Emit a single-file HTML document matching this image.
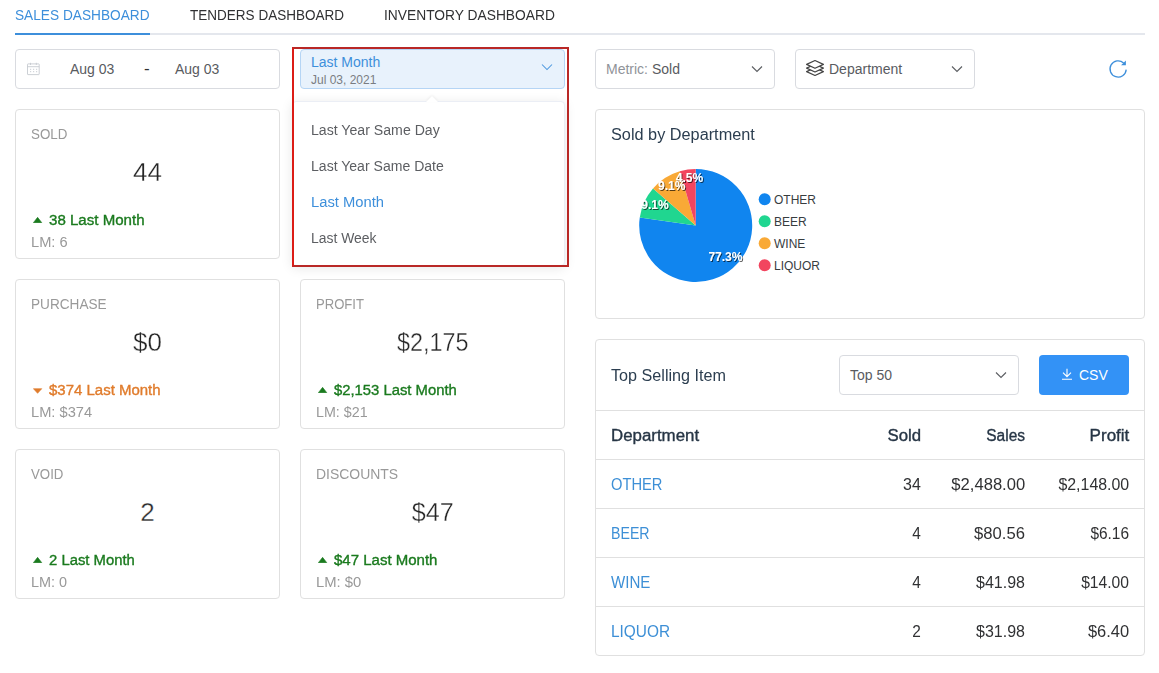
<!DOCTYPE html>
<html><head><meta charset="utf-8">
<style>
*{box-sizing:border-box;margin:0;padding:0}
html,body{width:1159px;height:673px;background:#fff;overflow:hidden}
body{font-family:"Liberation Sans",Arial,sans-serif;color:#333;position:relative;font-size:14px}
.abs{position:absolute}
span{white-space:nowrap}
.tabs{position:absolute;left:15px;top:0;width:1130px;height:35px;border-bottom:2px solid #e4e7ed}
.tab{position:absolute;top:7px;font-size:14px;line-height:16px;color:#303133;white-space:nowrap}
.tab.active{color:#3d8fdb}
.tabline{position:absolute;left:0;top:33px;width:135px;height:2px;background:#3d8fdb}
.box{position:absolute;border:1px solid #d9dbe0;border-radius:4px;background:#fff}
.card{position:absolute;border:1px solid #e0e0e0;border-radius:4px;background:#fff;width:265px;height:150px}
.card .t{position:absolute;left:15px;top:16px;font-size:14px;color:#999;line-height:16px}
.card .v{position:absolute;left:0;right:0;top:46px;text-align:center;font-size:26px;line-height:32px;color:#262626;-webkit-text-stroke:0.35px #fff}
.card .d{position:absolute;left:15px;top:102px;font-size:14px;line-height:16px;white-space:nowrap;-webkit-text-stroke:0.35px currentColor}
.card .l{position:absolute;left:15px;top:124px;font-size:14px;line-height:16px;color:#999}
.up{color:#1a7a1e}.down{color:#e07c2c}
.tri{position:absolute;left:2.4px;top:4.6px;width:9.2px;height:6px}
.down .tri{top:5.6px}
.card .d>span{margin-left:18px}
.ddi{position:absolute;left:311px;font-size:14px;line-height:16px;color:#5c5e62;white-space:nowrap}
.hl{position:absolute;left:596px;width:548px;height:1px;background:#e0e0e0}
.tr{position:absolute;left:595px;width:550px;height:18px;font-size:16px;line-height:18px;color:#303133}
.tr span{position:absolute;top:0;white-space:nowrap}
.tr .c1{left:16px}.tr .c2{right:224px}.tr .c3{right:120px}.tr .c4{right:16px}
.th{color:#263545;-webkit-text-stroke:0.35px #263545}
.lk{color:#3d8fd6}
.pl{font-size:12px;font-weight:bold;fill:#fff;font-family:"Liberation Sans",Arial,sans-serif}
.lg{font-size:12px;fill:#373d3f;font-family:"Liberation Sans",Arial,sans-serif}
</style></head><body>
<div class="tabs">
 <div class="tab active" style="left:0"><span style="display:inline-block;transform:scaleX(0.977);transform-origin:left center">SALES DASHBOARD</span></div>
 <div class="tab" style="left:175px"><span style="display:inline-block;transform:scaleX(0.966);transform-origin:left center">TENDERS DASHBOARD</span></div>
 <div class="tab" style="left:369px"><span style="display:inline-block;transform:scaleX(0.985);transform-origin:left center">INVENTORY DASHBOARD</span></div>
 <div class="tabline"></div>
</div>

<!-- date range -->
<div class="box" style="left:15px;top:49px;width:265px;height:40px"></div>
<svg class="abs" style="left:26px;top:61px" width="15" height="15" viewBox="0 0 15 15" fill="none" stroke="#c3c7ce" stroke-width="0.85"><rect x="1.5" y="2.9" width="11.7" height="10.7" rx="0.5"/><path d="M1.5 5.7H13.2M4.5 1.8V4M10.3 1.8V4"/><path d="M4 8.3H5.2M7 8.3H8.2M10 8.3H11.2M4 10.7H5.2M7 10.7H8.2M10 10.7H11.2" stroke-width="0.9"/></svg>
<div class="abs" style="left:70px;top:61px;font-size:14px;line-height:16px;color:#595b5f">Aug 03</div>
<div class="abs" style="left:144px;top:60.5px;font-size:17px;line-height:16px;color:#303133">-</div>
<div class="abs" style="left:175px;top:61px;font-size:14px;line-height:16px;color:#595b5f">Aug 03</div>

<!-- cards -->
<div class="card" style="left:15px;top:109px"><div class="t"><span style="display:inline-block;transform:scaleX(0.955);transform-origin:left center">SOLD</span></div><div class="v"><span style="display:inline-block;transform:scaleX(1.001);transform-origin:center center">44</span></div><div class="d up"><svg class="tri" viewBox="0 0 9.4 6"><path d="M4.7 0.3L9 5.7H0.4Z" fill="#1a7a1e" stroke="#1a7a1e" stroke-width="0.6" stroke-linejoin="round"/></svg><span style="display:inline-block;transform:scaleX(1.077);transform-origin:left center">38 Last Month</span></div><div class="l"><span style="display:inline-block;transform:scaleX(1.046);transform-origin:left center">LM: 6</span></div></div>
<div class="card" style="left:15px;top:279px"><div class="t"><span style="display:inline-block;transform:scaleX(0.972);transform-origin:left center">PURCHASE</span></div><div class="v"><span style="display:inline-block;transform:scaleX(1.001);transform-origin:center center">$0</span></div><div class="d down"><svg class="tri" viewBox="0 0 9.4 6"><path d="M4.7 5.4L9 0.6H0.4Z" fill="#e07c2c" stroke="#e07c2c" stroke-width="0.6" stroke-linejoin="round"/></svg><span style="display:inline-block;transform:scaleX(1.070);transform-origin:left center">$374 Last Month</span></div><div class="l"><span style="display:inline-block;transform:scaleX(1.047);transform-origin:left center">LM: $374</span></div></div>
<div class="card" style="left:300px;top:279px"><div class="t"><span style="display:inline-block;transform:scaleX(0.935);transform-origin:left center">PROFIT</span></div><div class="v"><span style="display:inline-block;transform:scaleX(0.898);transform-origin:center center">$2,175</span></div><div class="d up"><svg class="tri" viewBox="0 0 9.4 6"><path d="M4.7 0.3L9 5.7H0.4Z" fill="#1a7a1e" stroke="#1a7a1e" stroke-width="0.6" stroke-linejoin="round"/></svg><span style="display:inline-block;transform:scaleX(1.059);transform-origin:left center">$2,153 Last Month</span></div><div class="l"><span style="display:inline-block;transform:scaleX(1.020);transform-origin:left center">LM: $21</span></div></div>
<div class="card" style="left:15px;top:449px"><div class="t"><span style="display:inline-block;transform:scaleX(0.947);transform-origin:left center">VOID</span></div><div class="v"><span style="display:inline-block;transform:scaleX(1.000);transform-origin:center center">2</span></div><div class="d up"><svg class="tri" viewBox="0 0 9.4 6"><path d="M4.7 0.3L9 5.7H0.4Z" fill="#1a7a1e" stroke="#1a7a1e" stroke-width="0.6" stroke-linejoin="round"/></svg><span style="display:inline-block;transform:scaleX(1.060);transform-origin:left center">2 Last Month</span></div><div class="l"><span style="display:inline-block;transform:scaleX(1.031);transform-origin:left center">LM: 0</span></div></div>
<div class="card" style="left:300px;top:449px"><div class="t"><span style="display:inline-block;transform:scaleX(0.996);transform-origin:left center">DISCOUNTS</span></div><div class="v"><span style="display:inline-block;transform:scaleX(0.967);transform-origin:center center">$47</span></div><div class="d up"><svg class="tri" viewBox="0 0 9.4 6"><path d="M4.7 0.3L9 5.7H0.4Z" fill="#1a7a1e" stroke="#1a7a1e" stroke-width="0.6" stroke-linejoin="round"/></svg><span style="display:inline-block;transform:scaleX(1.072);transform-origin:left center">$47 Last Month</span></div><div class="l"><span style="display:inline-block;transform:scaleX(1.059);transform-origin:left center">LM: $0</span></div></div>

<!-- compare dropdown -->
<div class="abs" style="left:292px;top:101px;width:273px;height:165px;background:#fff;border:1px solid #ebeef5;border-radius:4px;box-shadow:0 2px 12px rgba(0,0,0,.1)"></div>
<div class="abs" style="left:426px;top:96px;width:0;height:0;border-left:6px solid transparent;border-right:6px solid transparent;border-bottom:6px solid #fff;filter:drop-shadow(0 -1px 1px rgba(0,0,0,.06))"></div>
<div class="abs" style="left:300px;top:49px;width:265px;height:40px;background:#e8f2fc;border:1px solid #b5d5f5;border-radius:4px"></div>
<div class="abs" style="left:311px;top:54px;font-size:14px;line-height:16px;color:#3d8fdb">Last Month</div>
<div class="abs" style="left:311px;top:73px;font-size:12px;line-height:14px;color:#7a7d82">Jul 03, 2021</div>
<svg class="abs" style="left:540px;top:62px" width="14" height="10" viewBox="0 0 14 10"><path d="M2 2.5L7 7.5L12 2.5" fill="none" stroke="#4a97de" stroke-width="1.05"/></svg>
<div class="ddi" style="top:122px"><span style="display:inline-block;transform:scaleX(1.009);transform-origin:left center">Last Year Same Day</span></div>
<div class="ddi" style="top:158px"><span style="display:inline-block;transform:scaleX(1.004);transform-origin:left center">Last Year Same Date</span></div>
<div class="ddi" style="top:194px;color:#3d8fdb"><span style="display:inline-block;transform:scaleX(1.054);transform-origin:left center">Last Month</span></div>
<div class="ddi" style="top:230px"><span style="display:inline-block;transform:scaleX(0.994);transform-origin:left center">Last Week</span></div>
<div class="abs" style="left:292px;top:47px;width:277px;height:220px;border:2px solid #b92826;border-left-color:#dc1c16"></div>

<!-- metric / department -->
<div class="box" style="left:595px;top:49px;width:180px;height:40px"></div>
<div class="abs" style="left:606px;top:61px;font-size:14px;line-height:16px;color:#909399">Metric: <span style="color:#595b5f">Sold</span></div>
<svg class="abs" style="left:750px;top:64px" width="14" height="10" viewBox="0 0 14 10"><path d="M2 2.5L7 7.5L12 2.5" fill="none" stroke="#5d5f63" stroke-width="1.15"/></svg>
<div class="box" style="left:795px;top:49px;width:180px;height:40px"></div>
<div class="abs" style="left:829px;top:61px;font-size:14px;line-height:16px;color:#595b5f">Department</div>
<svg class="abs" style="left:950px;top:64px" width="14" height="10" viewBox="0 0 14 10"><path d="M2 2.5L7 7.5L12 2.5" fill="none" stroke="#5d5f63" stroke-width="1.15"/></svg>
<svg class="abs" style="left:805px;top:59px" width="20" height="20" viewBox="0 0 20 20" fill="#fff" stroke="#444" stroke-width="1.2" stroke-linejoin="round"><path d="M10 8.7L18.4 12.6L10 16.5L1.6 12.6Z"/><path d="M10 5.2L18.4 9.1L10 13L1.6 9.1Z"/><path d="M10 1.5L18.4 5.4L10 9.3L1.6 5.4Z"/></svg>
<svg class="abs" style="left:1107px;top:58px" width="22" height="22" viewBox="0 0 22 22" fill="none"><path d="M19.2 11.6A8.1 8.1 0 1 1 16.6 5" stroke="#3d8fdb" stroke-width="1.3"/><path d="M18.9 2.4V7.2H14.1Z" fill="#3d8fdb"/></svg>

<!-- pie panel -->
<div class="box" style="left:595px;top:109px;width:550px;height:210px;border-color:#e0e0e0"></div>
<div class="abs" style="left:611px;top:126px;font-size:16px;line-height:18px;color:#2c3e50"><span style="display:inline-block;transform:scaleX(1.017);transform-origin:left center">Sold by Department</span></div>
<svg class="abs" style="left:0;top:0" width="1159" height="673" viewBox="0 0 1159 673">
<defs><filter id="ds" x="-20%" y="-20%" width="140%" height="160%"><feDropShadow dx="1" dy="1" stdDeviation="0.65" flood-color="#000" flood-opacity="0.65"/></filter></defs>
<path d="M695.7 225.5L695.70 169.00A56.5 56.5 0 1 1 639.78 217.46Z" fill="#1085ef"/><path d="M695.7 225.5L639.78 217.46A56.5 56.5 0 0 1 653.00 188.50Z" fill="#20d690"/><path d="M695.7 225.5L653.00 188.50A56.5 56.5 0 0 1 679.78 171.29Z" fill="#f9a936"/><path d="M695.7 225.5L679.78 171.29A56.5 56.5 0 0 1 695.70 169.00Z" fill="#f2455f"/>
<g filter="url(#ds)"><text x="725.4" y="261.1" text-anchor="middle" class="pl">77.3%</text><text x="655" y="208.7" text-anchor="middle" class="pl">9.1%</text><text x="671.8" y="189.9" text-anchor="middle" class="pl">9.1%</text><text x="689.4" y="181.5" text-anchor="middle" class="pl">4.5%</text></g>
<circle cx="764.7" cy="199.2" r="6" fill="#1085ef"/><text x="774" y="203.5" class="lg">OTHER</text><circle cx="764.7" cy="221.2" r="6" fill="#20d690"/><text x="774" y="225.5" class="lg">BEER</text><circle cx="764.7" cy="243.2" r="6" fill="#f9a936"/><text x="774" y="247.5" class="lg">WINE</text><circle cx="764.7" cy="265.2" r="6" fill="#f2455f"/><text x="774" y="269.5" class="lg">LIQUOR</text>
</svg>

<!-- table panel -->
<div class="box" style="left:595px;top:339px;width:550px;height:317px;border-color:#e0e0e0"></div>
<div class="abs" style="left:611px;top:367px;font-size:16px;line-height:18px;color:#2c3e50"><span style="display:inline-block;transform:scaleX(1.010);transform-origin:left center">Top Selling Item</span></div>
<div class="box" style="left:839px;top:355px;width:180px;height:40px"></div>
<div class="abs" style="left:850px;top:367px;font-size:14px;line-height:16px;color:#595b5f">Top 50</div>
<svg class="abs" style="left:994px;top:370px" width="14" height="10" viewBox="0 0 14 10"><path d="M2 2.5L7 7.5L12 2.5" fill="none" stroke="#5d5f63" stroke-width="1.15"/></svg>
<div class="abs" style="left:1039px;top:355px;width:90px;height:40px;background:#3392f6;border-radius:4px"></div>
<div class="abs" style="left:1079px;top:367px;font-size:14px;line-height:16px;color:#fff">CSV</div>
<svg class="abs" style="left:1060px;top:367px" width="14" height="14" viewBox="0 0 14 14" fill="none" stroke="#fff" stroke-width="1.1"><path d="M7 1.8V9.3M3 5.6L7 9.6L11 5.6M2 12.2H12"/></svg>
<div class="hl" style="top:410px"></div>
<div class="hl" style="top:459px"></div>
<div class="hl" style="top:508px"></div>
<div class="hl" style="top:557px"></div>
<div class="hl" style="top:606px"></div>
<div class="tr th" style="top:427px"><span class="c1 " style="display:inline-block;transform:scaleX(1.054);transform-origin:left center">Department</span><span class="c2" style="display:inline-block;transform:scaleX(1.048);transform-origin:right center">Sold</span><span class="c3" style="display:inline-block;transform:scaleX(0.968);transform-origin:right center">Sales</span><span class="c4" style="display:inline-block;transform:scaleX(1.064);transform-origin:right center">Profit</span></div>
<div class="tr " style="top:476px"><span class="c1 lk" style="display:inline-block;transform:scaleX(0.919);transform-origin:left center">OTHER</span><span class="c2" style="display:inline-block;transform:scaleX(0.997);transform-origin:right center">34</span><span class="c3" style="display:inline-block;transform:scaleX(1.037);transform-origin:right center">$2,488.00</span><span class="c4" style="display:inline-block;transform:scaleX(0.994);transform-origin:right center">$2,148.00</span></div>
<div class="tr " style="top:525px"><span class="c1 lk" style="display:inline-block;transform:scaleX(0.886);transform-origin:left center">BEER</span><span class="c2" style="display:inline-block;transform:scaleX(0.963);transform-origin:right center">4</span><span class="c3" style="display:inline-block;transform:scaleX(1.039);transform-origin:right center">$80.56</span><span class="c4" style="display:inline-block;transform:scaleX(0.965);transform-origin:right center">$6.16</span></div>
<div class="tr " style="top:574px"><span class="c1 lk" style="display:inline-block;transform:scaleX(0.942);transform-origin:left center">WINE</span><span class="c2" style="display:inline-block;transform:scaleX(0.963);transform-origin:right center">4</span><span class="c3" style="display:inline-block;transform:scaleX(0.998);transform-origin:right center">$41.98</span><span class="c4" style="display:inline-block;transform:scaleX(0.977);transform-origin:right center">$14.00</span></div>
<div class="tr " style="top:623px"><span class="c1 lk" style="display:inline-block;transform:scaleX(0.963);transform-origin:left center">LIQUOR</span><span class="c2" style="display:inline-block;transform:scaleX(0.963);transform-origin:right center">2</span><span class="c3" style="display:inline-block;transform:scaleX(0.998);transform-origin:right center">$31.98</span><span class="c4" style="display:inline-block;transform:scaleX(1.028);transform-origin:right center">$6.40</span></div>

</body></html>
